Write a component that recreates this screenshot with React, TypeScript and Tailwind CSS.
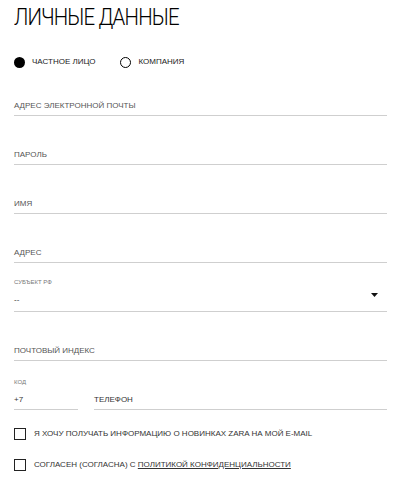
import React from 'react';

const font = { fontFamily: '"Liberation Sans", Arial, sans-serif' };

function Field({ label }: { label: string }) {
    return (
        <div className="h-[49px] border-b border-[#cfcfcf] flex items-end">
            <span className="pb-[3px] text-[8px] leading-[12px] text-[#555]">{label}</span>
        </div>
    );
}

function Radio({ checked, label }: { checked?: boolean; label: string }) {
    return (
        <label className="flex items-center gap-[7px]">
            <span
                className={
                    checked
                        ? 'w-[11px] h-[11px] rounded-full bg-black'
                        : 'w-[11px] h-[11px] rounded-full border border-black bg-white'
                }
            />
            <span className="text-[8px] leading-[10px] text-[#222]">{label}</span>
        </label>
    );
}

function Check({ children }: { children: React.ReactNode }) {
    return (
        <div className="flex items-center gap-[8px] h-[12px]">
            <span className="w-[12px] h-[12px] border border-[#222] bg-white shrink-0" />
            <span className="text-[8px] leading-[12px] text-[#333]">{children}</span>
        </div>
    );
}

export default function App() {
    return (
        <div className="w-[399px] h-[492px] bg-white pl-[14px] pr-[12px]" style={font}>
            {/* title */}
            <div className="h-[57px] pt-[5px]">
                <h1
                    className="text-[24px] leading-none font-light text-black tracking-[-0.04em] origin-left scale-x-[0.85] whitespace-nowrap"
                    style={{ fontFamily: 'Roboto, sans-serif' }}
                >
                    ЛИЧНЫЕ ДАННЫЕ
                </h1>
            </div>

            <div className="h-[10px] flex items-center gap-[25px]">
                <Radio checked label="ЧАСТНОЕ ЛИЦО" />
                <Radio label="КОМПАНИЯ" />
            </div>

            <Field label="АДРЕС ЭЛЕКТРОННОЙ ПОЧТЫ" />
            <Field label="ПАРОЛЬ" />
            <Field label="ИМЯ" />
            <Field label="АДРЕС" />

            {/* region select */}
            <div className="h-[49px] border-b border-[#cfcfcf] flex flex-col justify-end">
                <span className="text-[6px] leading-[8px] text-[#777]">СУБЪЕКТ РФ</span>
                <div className="flex items-center justify-between pt-[8px] pb-[5px]">
                    <span className="text-[8px] leading-[12px] text-[#333]">--</span>
                    <svg width="7" height="4" viewBox="0 0 7 4" className="mr-[9px] -mt-[10px]">
                        <path d="M0 0h7L3.5 4z" fill="#111" />
                    </svg>
                </div>
            </div>

            <Field label="ПОЧТОВЫЙ ИНДЕКС" />

            {/* phone */}
            <div className="h-[49px] flex gap-[16px]">
                <div className="w-[64px] border-b border-[#cfcfcf] flex flex-col justify-end">
                    <span className="text-[6px] leading-[8px] text-[#777]">КОД</span>
                    <span className="pt-[8px] pb-[3px] text-[8px] leading-[12px] text-[#333]">+7</span>
                </div>
                <div className="flex-1 border-b border-[#cfcfcf] flex items-end">
                    <span className="pb-[3px] text-[8px] leading-[12px] text-[#333]">ТЕЛЕФОН</span>
                </div>
            </div>

            <div className="pt-[18px] flex flex-col gap-[19px]">
                <Check>Я ХОЧУ ПОЛУЧАТЬ ИНФОРМАЦИЮ О НОВИНКАХ ZARA НА МОЙ E-MAIL</Check>
                <Check>
                    СОГЛАСЕН (СОГЛАСНА) С <span className="underline">ПОЛИТИКОЙ КОНФИДЕНЦИАЛЬНОСТИ</span>
                </Check>
            </div>
        </div>
    );
}
